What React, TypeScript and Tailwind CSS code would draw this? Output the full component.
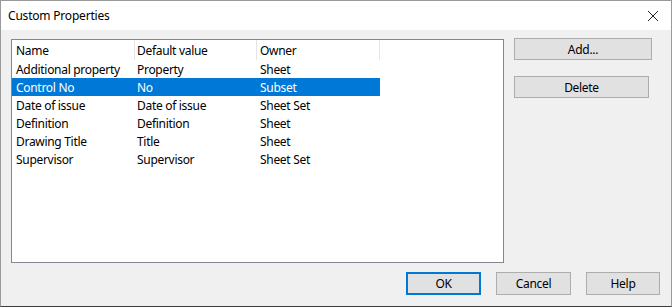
import React from "react";

const rows = [
  ["Additional property", "Property", "Sheet"],
  ["Control No", "No", "Subset"],
  ["Date of issue", "Date of issue", "Sheet Set"],
  ["Definition", "Definition", "Sheet"],
  ["Drawing Title", "Title", "Sheet"],
  ["Supervisor", "Supervisor", "Sheet Set"],
];

function Btn({ label, w, primary }: { label: string; w: string; primary?: boolean }) {
  return (
    <div
      className={`${w} flex items-center justify-center bg-[#e1e1e1] border ${
        primary ? "border-[#0078d7] border-2" : "border-[#adadad]"
      } text-[12px] tracking-[-0.3px] text-black leading-none pt-[1px]`}
    >
      {label}
    </div>
  );
}

export default function App() {
  return (
    <div
      className="w-[672px] h-[307px] flex flex-col bg-[#f0f0f0] border border-[#9a9a9a] border-b-[#3c3c3c] overflow-hidden"
      style={{ fontFamily: '"Segoe UI", "Noto Sans", sans-serif' }}
    >
      <div className="h-[29px] shrink-0 bg-white flex items-center justify-between pl-[7px] pr-[10px]">
        <span className="text-[12px] tracking-[-0.2px] text-black">Custom Properties</span>
        <svg width="12" height="12" viewBox="0 0 12 12" className="mr-[2px]">
          <path d="M1 1 L11 11 M11 1 L1 11" stroke="#222" strokeWidth="1" fill="none" />
        </svg>
      </div>
      <div className="flex-1 flex flex-col pl-[10px] pt-[9px]">
        <div className="flex gap-[10px]">
          <div className="w-[493px] h-[224px] bg-white border border-[#828790] text-[12px] tracking-[-0.3px] text-black leading-none">
            <div className="flex h-[20px]">
              <div className="w-[123px] border-r border-[#e5e5e5] pl-[4px] pt-[2px] flex items-center">Name</div>
              <div className="w-[122px] border-r border-[#e5e5e5] pl-[2px] pt-[2px] flex items-center">Default value</div>
              <div className="w-[123px] border-r border-[#e5e5e5] pl-[3px] pt-[2px] flex items-center">Owner</div>
            </div>
            {rows.map((r, i) => {
              const sel = i === 1;
              return (
                <div
                  key={i}
                  className={`flex h-[18px] w-[368px] ${sel ? "bg-[#0078d7] text-white" : ""}`}
                >
                  <div className="w-[123px] pl-[4px] pt-[1px] flex items-center">{r[0]}</div>
                  <div className="w-[122px] pl-[2px] pt-[1px] flex items-center">{r[1]}</div>
                  <div className="w-[123px] pl-[3px] pt-[1px] flex items-center">{r[2]}</div>
                </div>
              );
            })}
          </div>
          <div className="flex flex-col gap-[16px]">
            <div className="-mt-[1px]">
              <Btn label="Add..." w="w-[138px] h-[22px]" />
            </div>
            <Btn label="Delete" w="w-[135px] h-[22px]" />
          </div>
        </div>
        <div className="flex justify-end gap-[15px] mt-[9px] pr-[11px]">
          <Btn label="OK" w="w-[75px] h-[23px]" primary />
          <Btn label="Cancel" w="w-[75px] h-[23px]" />
          <Btn label="Help" w="w-[74px] h-[23px]" />
        </div>
      </div>
    </div>
  );
}
